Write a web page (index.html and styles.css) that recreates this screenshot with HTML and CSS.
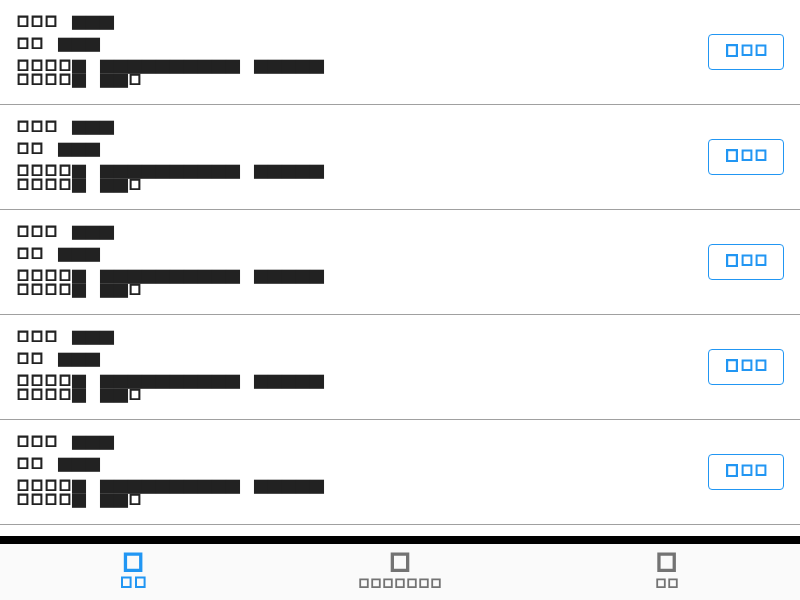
FILE: index.html
```html
<!DOCTYPE html>
<html lang="en">
<head>
<meta charset="utf-8">
<title>List</title>
<link rel="stylesheet" href="styles.css">
</head>
<body>
<svg class="defs" aria-hidden="true">
  <defs>
    <path id="box" fill-rule="evenodd" d="M1.6 .6H12.4V12H1.6ZM3.65 2.65V10.2H10.35V2.65Z"/>
    <rect id="block" x="-.03" y=".7" width="14.06" height="14.1"/>
    <g id="block5"><use href="#block"/><use href="#block" x="14"/><use href="#block" x="28"/><use href="#block" x="42"/><use href="#block" x="56"/></g>
    <g id="box4"><use href="#box"/><use href="#box" x="14"/><use href="#box" x="28"/><use href="#box" x="42"/></g>
    <g id="title"><use href="#box"/><use href="#box" x="14"/><use href="#box" x="28"/><use href="#block" x="56"/><use href="#block" x="70"/><use href="#block" x="84"/></g>
    <g id="subtitle"><use href="#box"/><use href="#box" x="14"/><use href="#block" x="42"/><use href="#block" x="56"/><use href="#block" x="70"/></g>
    <g id="detail">
      <use href="#box4"/><use href="#block" x="56"/><use href="#block5" x="84"/><use href="#block5" x="154"/><use href="#block5" x="238"/>
      <use href="#box4" y="14"/><use href="#block" x="56" y="14"/><use href="#block" x="84" y="14"/><use href="#block" x="98" y="14"/><use href="#box" x="112" y="14"/>
    </g>
    <path id="small-box" fill-rule="evenodd" d="M.3 .4H9.7V10H.3ZM2.1 2.2V8.3H7.9V2.2Z"/>
    <path id="tab-box" fill-rule="evenodd" d="M.3 .4H18.9V20H.3ZM3.6 3.7V16.7H15.6V3.7Z"/>
    <g id="action">
      <path fill-rule="evenodd" d="M1 0H13V13H1ZM3.2 2.2V10.9H10.8V2.2Z"/>
      <path id="action-box" fill-rule="evenodd" d="M16.6 .6H27.4V12H16.6ZM18.6 2.6V10.1H25.4V2.6Z"/>
      <use href="#action-box" x="14"/>
    </g>
  </defs>
</svg>
<main class="list">
  <section class="row">
    <div class="copy"><svg class="line"><use href="#title"/></svg><svg class="line"><use href="#subtitle"/></svg><svg class="detail"><use href="#detail"/></svg></div>
    <button class="action"><svg><use href="#action"/></svg></button>
  </section>
  <section class="row">
    <div class="copy"><svg class="line"><use href="#title"/></svg><svg class="line"><use href="#subtitle"/></svg><svg class="detail"><use href="#detail"/></svg></div>
    <button class="action"><svg><use href="#action"/></svg></button>
  </section>
  <section class="row">
    <div class="copy"><svg class="line"><use href="#title"/></svg><svg class="line"><use href="#subtitle"/></svg><svg class="detail"><use href="#detail"/></svg></div>
    <button class="action"><svg><use href="#action"/></svg></button>
  </section>
  <section class="row">
    <div class="copy"><svg class="line"><use href="#title"/></svg><svg class="line"><use href="#subtitle"/></svg><svg class="detail"><use href="#detail"/></svg></div>
    <button class="action"><svg><use href="#action"/></svg></button>
  </section>
  <section class="row">
    <div class="copy"><svg class="line"><use href="#title"/></svg><svg class="line"><use href="#subtitle"/></svg><svg class="detail"><use href="#detail"/></svg></div>
    <button class="action"><svg><use href="#action"/></svg></button>
  </section>
</main>
<nav class="tabs">
  <a class="tab active">
    <svg class="tab-icon" viewBox="0 0 20 20"><use href="#tab-box" x=".5"/></svg>
    <svg class="tab-label label-large" viewBox="0 0 26 12">
      <path id="active-box" fill-rule="evenodd" d="M1 .5H11.6V12H1ZM3 2.5V10H9.6V2.5Z"/>
      <use href="#active-box" x="14"/>
    </svg>
  </a>
  <a class="tab">
    <svg class="tab-icon" viewBox="0 0 20 20"><use href="#tab-box" x=".4"/></svg>
    <svg class="tab-label label-long" viewBox="0 0 84 12"><use href="#small-box" x="1" y="2"/><use href="#small-box" x="13" y="2"/><use href="#small-box" x="25" y="2"/><use href="#small-box" x="37" y="2"/><use href="#small-box" x="49" y="2"/><use href="#small-box" x="61" y="2"/><use href="#small-box" x="73" y="2"/></svg>
  </a>
  <a class="tab">
    <svg class="tab-icon" viewBox="0 0 20 20"><use href="#tab-box"/></svg>
    <svg class="tab-label label-short" viewBox="0 0 24 12"><use href="#small-box" x="1" y="2"/><use href="#small-box" x="13" y="2"/></svg>
  </a>
</nav>
</body>
</html>
```
FILE: styles.css
```css
* { box-sizing: border-box; }

body {
  margin: 0;
  width: 800px;
  height: 600px;
  display: flex;
  flex-direction: column;
  overflow: hidden;
  background: #fff;
  font-family: Roboto, sans-serif;
}

svg { display: block; fill: currentColor; flex: none; }

.defs { width: 0; height: 0; position: absolute; }

.list { flex: 1; min-height: 0; overflow: hidden; }

.row {
  height: 105px;
  display: flex;
  align-items: center;
  justify-content: space-between;
  padding: 0 16px;
  border-bottom: 1px solid #a0a0a0;
}

.copy {
  display: flex;
  flex-direction: column;
  gap: 7px;
  color: #222;
  align-self: flex-start;
  padding-top: 15px;
}

.line { width: 310px; height: 15px; }
.detail { width: 310px; height: 30px; }

.action {
  width: 76px;
  height: 36px;
  margin: 0;
  padding: 9px 0 0 16px;
  border: 1px solid #2196f3;
  border-radius: 4px;
  background: transparent;
  color: #2196f3;
  display: flex;
  align-items: flex-start;
}

.action svg { width: 44px; height: 14px; }

.tabs {
  height: 64px;
  display: grid;
  grid-template-columns: 267px 266px 267px;
  border-top: 8px solid #000;
  background: #fafafa;
}

.tab {
  display: flex;
  flex-direction: column;
  align-items: center;
  padding-top: 8px;
  gap: 4px;
  color: #737373;
}

.tab.active { color: #2196f3; padding-right: 1px; }
.tab:last-child { padding-left: 1px; }
.tab-icon { width: 20px; height: 20px; }
.tab-label { height: 12px; }
.label-large { width: 26px; }
.label-long { width: 84px; margin-left: -1px; margin-right: -1px; }
.label-short { width: 24px; }
```
